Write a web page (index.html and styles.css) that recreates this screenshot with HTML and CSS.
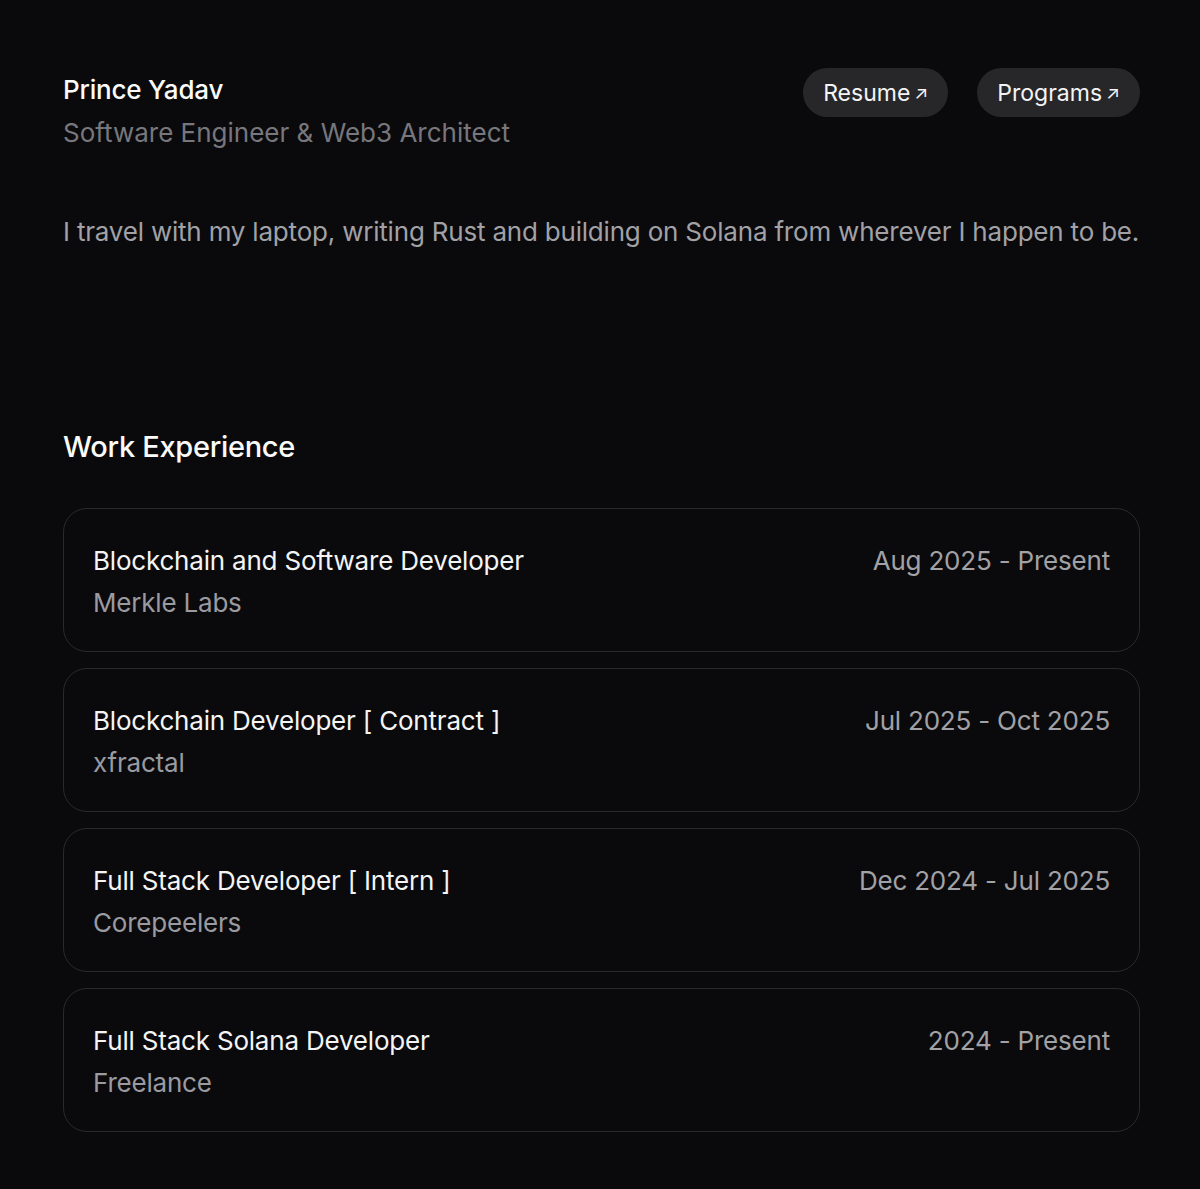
FILE: index.html
```html
<!DOCTYPE html>
<html lang="en">
<head>
  <meta charset="UTF-8">
  <title>Prince Yadav</title>
  <link rel="stylesheet" href="styles.css">
</head>
<body>
<div class="page">
  <header class="header">
    <div class="intro">
      <h1 class="name">Prince Yadav</h1>
      <p class="role">Software Engineer &amp; Web3 Architect</p>
    </div>
    <div class="links">
      <a class="pill" href="#">Resume <span class="arrow">&#8599;</span></a>
      <a class="pill" href="#">Programs <span class="arrow">&#8599;</span></a>
    </div>
  </header>

  <p class="bio">I travel with my laptop, writing Rust and building on Solana from wherever I happen to be.</p>

  <section class="work">
    <h2>Work Experience</h2>
    <div class="jobs">
      <div class="job">
        <div class="job-info">
          <div class="job-title">Blockchain and Software Developer</div>
          <div class="job-company">Merkle Labs</div>
        </div>
        <div class="job-date">Aug 2025 - Present</div>
      </div>
      <div class="job">
        <div class="job-info">
          <div class="job-title">Blockchain Developer [ Contract ]</div>
          <div class="job-company">xfractal</div>
        </div>
        <div class="job-date">Jul 2025 - Oct 2025</div>
      </div>
      <div class="job">
        <div class="job-info">
          <div class="job-title">Full Stack Developer [ Intern ]</div>
          <div class="job-company">Corepeelers</div>
        </div>
        <div class="job-date">Dec 2024 - Jul 2025</div>
      </div>
      <div class="job">
        <div class="job-info">
          <div class="job-title">Full Stack Solana Developer</div>
          <div class="job-company">Freelance</div>
        </div>
        <div class="job-date">2024 - Present</div>
      </div>
    </div>
  </section>
</div>
</body>
</html>
```

FILE: styles.css
```css
body {
  margin: 0;
  background-color: #0a0a0c;
  color: #fafafa;
  font-family: Inter, "Noto Sans", sans-serif;
}

.page {
  width: 1077px;
  margin-left: 63px;
  padding: 68px 0 40px;
}

.header {
  display: flex;
  justify-content: space-between;
  align-items: flex-start;
}

.name {
  margin: 0;
  font-size: 26px;
  font-weight: 500;
  line-height: 43px;
  letter-spacing: -0.2px;
}

.role {
  margin: 0;
  font-size: 26px;
  line-height: 43px;
  color: #77777d;
  letter-spacing: 0;
}

.links {
  display: flex;
  gap: 29px;
}

.pill {
  display: flex;
  align-items: center;
  height: 49px;
  padding: 0 20px 0 20px;
  border-radius: 25px;
  background-color: #27272a;
  color: #f4f4f5;
  font-size: 23px;
  text-decoration: none;
}

.arrow {
  font-size: 18px;
  margin-left: 4px;
}

.bio {
  margin: 58px 0 0;
  font-size: 26px;
  line-height: 40px;
  color: #a1a1a6;
  letter-spacing: -0.2px;
}

.work h2 {
  margin: 175px 0 0;
  font-size: 29px;
  font-weight: 500;
  line-height: 40px;
  letter-spacing: -0.3px;
}

.jobs {
  display: flex;
  flex-direction: column;
  gap: 16px;
  margin-top: 41px;
}

.job {
  display: flex;
  justify-content: space-between;
  align-items: flex-start;
  height: 144px;
  box-sizing: border-box;
  padding: 31px 29px;
  border: 1px solid #2a2a2d;
  border-radius: 24px;
}

.job-title {
  font-size: 26px;
  line-height: 42px;
  color: #f4f4f5;
  letter-spacing: -0.2px;
}

.job-company {
  font-size: 26px;
  line-height: 42px;
  color: #9a9aa0;
  letter-spacing: -0.2px;
}

.job-date {
  font-size: 26px;
  line-height: 42px;
  color: #a1a1a6;
  letter-spacing: -0.2px;
}
```
